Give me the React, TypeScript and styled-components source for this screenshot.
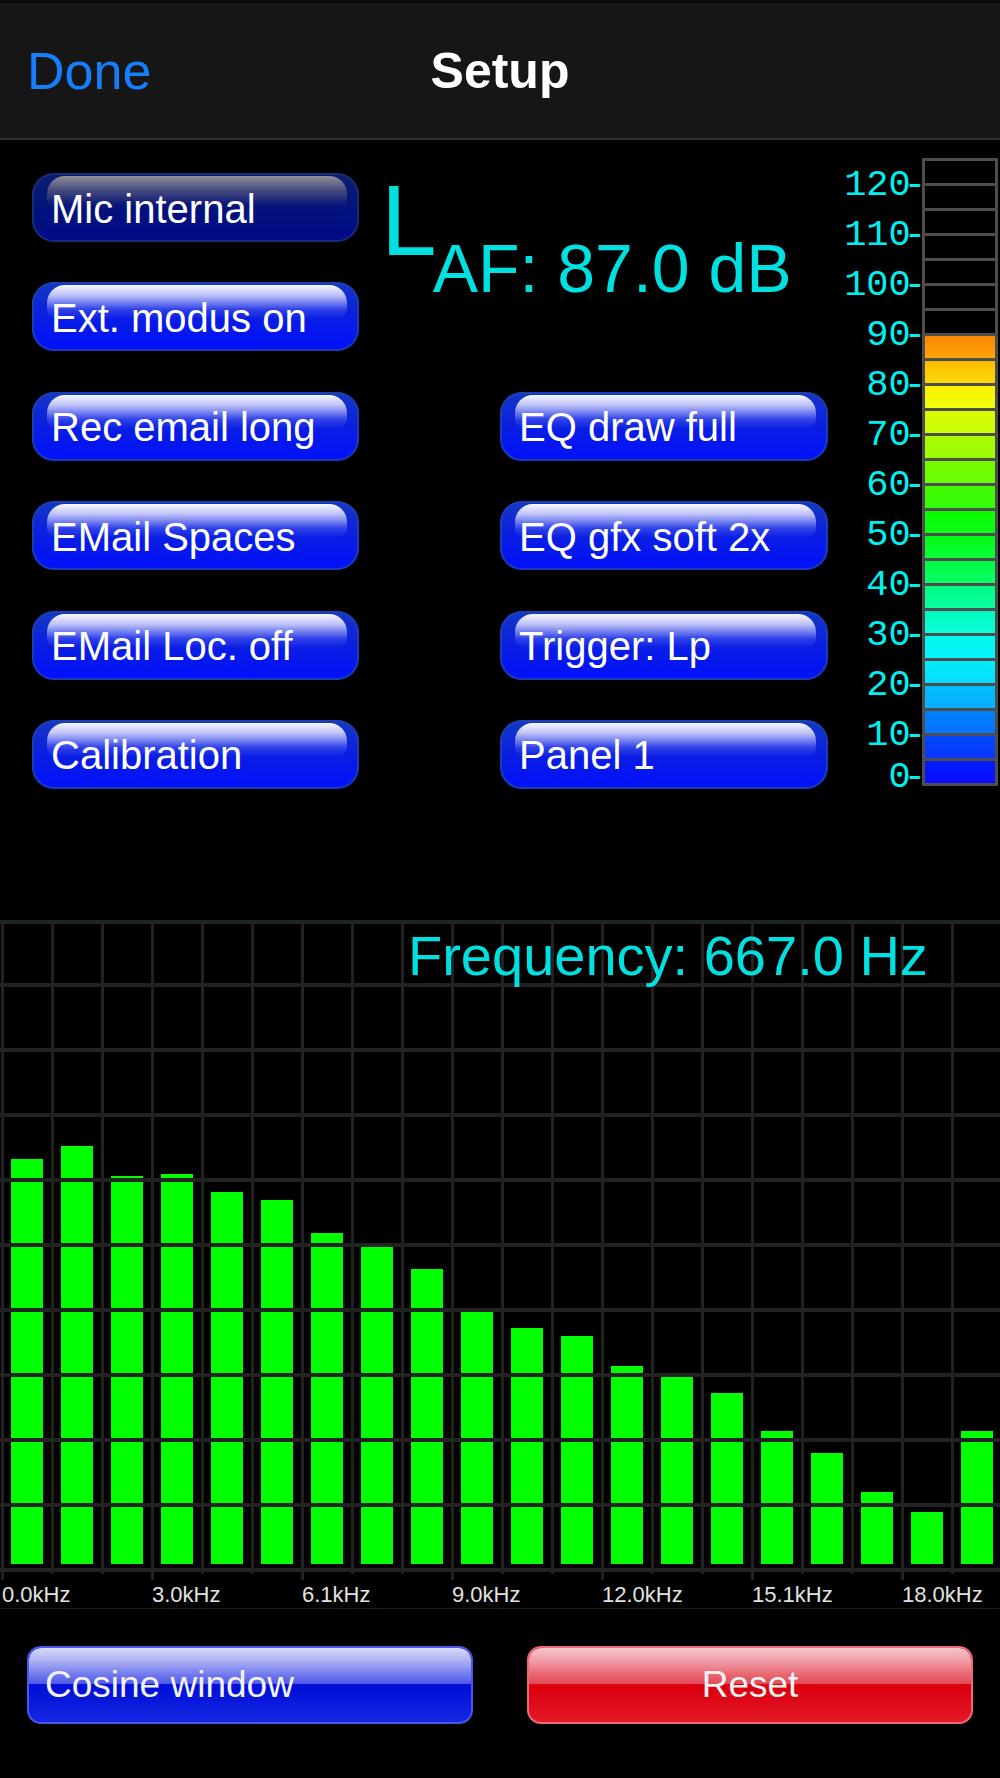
import React from 'react';
import styled, { createGlobalStyle } from 'styled-components';

const GlobalStyle = createGlobalStyle`
  html, body {
    margin: 0;
    padding: 0;
    background: #000;
  }
  body {
    font-family: 'Liberation Sans', Arial, Helvetica, sans-serif;
  }
  *, *::before, *::after {
    box-sizing: border-box;
  }
`;

const Screen = styled.div`
  width: 1000px;
  height: 1778px;
  background: #000;
  overflow: hidden;
  display: flex;
  flex-direction: column;
`;

/* ---------- nav bar ---------- */

const NavBar = styled.header`
  height: 140px;
  flex-shrink: 0;
  border-top: 3px solid #0a0a0a;
  border-bottom: 2px solid #2b2b2b;
  background: #161616;
  display: grid;
  grid-template-columns: 1fr auto 1fr;
  align-items: center;
  padding: 0 23px;
`;

const NavButton = styled.span`
  justify-self: start;
  padding-left: 4px;
  font-size: 52px;
  color: #167efa;
`;

const NavTitle = styled.h1`
  margin: 0;
  font-size: 50px;
  font-weight: bold;
  color: #fff;
`;

/* ---------- top panel ---------- */

const TopPanel = styled.section`
  height: 776px;
  flex-shrink: 0;
  display: flex;
`;

const Controls = styled.div`
  flex: 1;
  display: grid;
  grid-template-columns: 327px 328px;
  grid-auto-rows: 69px;
  column-gap: 141px;
  row-gap: 40.4px;
  padding: 33px 0 0 32px;
  align-content: start;
`;

const GlossButton = styled.button<{ $dim?: boolean }>`
  position: relative;
  height: 69px;
  padding: 3px 0 0 19px;
  border: none;
  border-radius: 22px;
  text-align: left;
  font-family: inherit;
  font-size: 40px;
  color: #fff;
  white-space: nowrap;
  background: ${(p) =>
    p.$dim
      ? 'linear-gradient(#0d1f72, #04127a 50%, #000a88)'
      : 'linear-gradient(#1638c2, #0a1ee2 50%, #0010fc)'};
  box-shadow: inset 0 0 0 2px
    ${(p) => (p.$dim ? 'rgba(22, 46, 118, 0.95)' : 'rgba(26, 64, 176, 0.95)')};

  &::before {
    content: '';
    position: absolute;
    left: 15px;
    right: 12px;
    top: 3px;
    height: 34px;
    border-radius: 18px 18px 10px 10px;
    background: ${(p) =>
      p.$dim
        ? 'linear-gradient(rgba(150, 150, 155, 0.95), rgba(100, 100, 130, 0.7) 40%, rgba(30, 40, 120, 0.15) 85%, rgba(10, 20, 120, 0))'
        : 'linear-gradient(rgba(255, 255, 255, 0.97), rgba(214, 214, 255, 0.88) 30%, rgba(100, 110, 255, 0.4) 72%, rgba(40, 60, 255, 0))'};
  }
`;

const ButtonLabel = styled.span`
  position: relative;
`;

const Readout = styled.div`
  grid-column: 2;
  grid-row: span 2;
  align-self: start;
  display: flex;
  align-items: flex-start;
  margin: -3px 0 0 -119px;
  color: #00e0e0;
  white-space: nowrap;
`;

const ReadoutLetter = styled.span`
  font-size: 100px;
  line-height: 1;
`;

const ReadoutValue = styled.span`
  font-size: 68px;
  line-height: 1;
  margin: 64px 0 0 -4px;
`;

/* ---------- level meter ---------- */

const Meter = styled.div`
  display: flex;
  align-items: flex-start;
  padding-top: 18px;
  margin-right: 2px;
`;

const MeterScale = styled.div`
  display: flex;
  flex-direction: column;
  padding-top: 2px;
  margin-right: -4px;
  font-family: 'Liberation Mono', 'Courier New', monospace;
  font-size: 37px;
  color: #00f0f0;
`;

const ScaleMark = styled.div<{ $last?: boolean }>`
  height: ${(p) => (p.$last ? '26px' : '50px')};
  display: flex;
  align-items: ${(p) => (p.$last ? 'flex-end' : 'center')};
  justify-content: flex-end;
  line-height: ${(p) => (p.$last ? '18px' : '1')};
  white-space: pre;
`;

/* the last digit sits close to the tick */
const TightDigit = styled.span`
  letter-spacing: -7px;
`;

const LowTick = styled.span`
  vertical-align: -9px;
`;

const MeterFrame = styled.div`
  width: 76px;
  border: 3px solid #4d4d4d;
  background: #4d4d4d;
  display: flex;
  flex-direction: column;
  gap: 3px;
`;

const Segment = styled.div<{ $hue: number | null }>`
  height: 22px;
  background: ${(p) =>
    p.$hue === null
      ? '#000'
      : `linear-gradient(hsl(${p.$hue - 3} 100% 49%), hsl(${p.$hue + 3} 100% 52%))`};
`;

/* ---------- spectrum ---------- */

const ChartWrap = styled.div`
  position: relative;
  flex-shrink: 0;
`;

const ChartSvg = styled.svg`
  display: block;
`;

const FreqLabel = styled.div`
  position: absolute;
  top: 12px;
  left: 408px;
  font-size: 56px;
  line-height: 1;
  color: #00e0e0;
  white-space: nowrap;
`;

const AxisRow = styled.div`
  display: grid;
  grid-template-columns: repeat(6, 150px) auto;
  height: 25px;
  margin-top: 2px;
  padding-left: 2px;
  border-bottom: 1px solid #152615;
  font-size: 22px;
  line-height: 22px;
  color: #e2e2e2;
`;

/* ---------- bottom buttons ---------- */

const BottomRow = styled.div`
  display: flex;
  gap: 54px;
  padding: 0 27px;
  margin-top: 37px;
`;

const tones = {
  blue: {
    edge: '#4a58ea',
    body: 'linear-gradient(#0a16d8, #0010d8 55%, #1628e2)',
    gloss: 'linear-gradient(#d8daf9, #aeb2f4 35%, #7078ee 75%, #5058ea)',
  },
  red: {
    edge: '#ea6a78',
    body: 'linear-gradient(#d8000e, #dc0010 55%, #e21a28)',
    gloss: 'linear-gradient(#f6c6cc, #f09ea8 35%, #e8646f 75%, #e24a58)',
  },
};

const WideButton = styled.button<{ $tone: 'blue' | 'red' }>`
  position: relative;
  width: 446px;
  height: 78px;
  border-radius: 14px;
  border: 2px solid ${(p) => tones[p.$tone].edge};
  background: ${(p) => tones[p.$tone].body};
  padding: ${(p) => (p.$tone === 'blue' ? '0 0 0 16px' : '0')};
  text-align: ${(p) => (p.$tone === 'blue' ? 'left' : 'center')};
  font-family: inherit;
  font-size: 37px;
  color: #f2f2f2;
  overflow: hidden;

  &::before {
    content: '';
    position: absolute;
    left: 0;
    right: 0;
    top: 0;
    height: 48%;
    border-radius: 12px 12px 0 0;
    background: ${(p) => tones[p.$tone].gloss};
  }
`;

/* ---------- data ---------- */

const leftButtons = [
  'Rec email long',
  'EMail Spaces',
  'EMail Loc. off',
  'Calibration',
];
const rightButtons = ['EQ draw full', 'EQ gfx soft 2x', 'Trigger: Lp', 'Panel 1'];

// hues of the lit segments, 85-90 dB down to 0-5 dB
const litHues = [35, 48, 60, 70, 82, 94, 107, 120, 128, 139, 154, 168, 180, 186, 197, 212, 226, 236];
const segments: (number | null)[] = [...Array(7).fill(null), ...litHues];
const scaleMarks = ['120', '110', '100', '90', '80', '70', '60', '50', '40', '30', '20', '10'];

const ORIGIN = 916;
const BAR_BASE = 1564;
const barTops = [
  1159, 1146, 1176, 1174, 1192, 1200, 1233, 1247, 1269, 1311,
  1328, 1336, 1366, 1376, 1393, 1431, 1453, 1492, 1512, 1431,
];
const axisLabels = ['0.0kHz', '3.0kHz', '6.1kHz', '9.0kHz', '12.0kHz', '15.1kHz', '18.0kHz'];

function Spectrum() {
  return (
    <ChartWrap>
      <ChartSvg width={1000} height={666} viewBox="0 0 1000 666">
        {barTops.map((top, i) => (
          <rect key={i} x={50 * i + 11} y={top - ORIGIN} width={32} height={BAR_BASE - top} fill="#00ff00" />
        ))}
        {Array.from({ length: 11 }, (_, j) => (
          <rect
            key={`h${j}`}
            x={0}
            y={j === 0 ? 4 : 2 + 65 * j}
            width={1000}
            height={4}
            fill={j === 0 ? '#1c281d' : '#222'}
          />
        ))}
        {Array.from({ length: 20 }, (_, i) => (
          <rect
            key={`v${i}`}
            x={50 * i + 1}
            y={4}
            width={3}
            height={(i % 3 === 0 ? 1580 : 1574) - 920}
            fill="#222"
          />
        ))}
      </ChartSvg>
      <FreqLabel>Frequency: 667.0 Hz</FreqLabel>
    </ChartWrap>
  );
}

export default function App() {
  return (
    <Screen>
      <GlobalStyle />
      <NavBar>
        <NavButton>Done</NavButton>
        <NavTitle>Setup</NavTitle>
      </NavBar>

      <TopPanel>
        <Controls>
          <GlossButton $dim>
            <ButtonLabel>Mic internal</ButtonLabel>
          </GlossButton>
          <Readout>
            <ReadoutLetter>L</ReadoutLetter>
            <ReadoutValue>AF: 87.0 dB</ReadoutValue>
          </Readout>
          <GlossButton>
            <ButtonLabel>Ext. modus on</ButtonLabel>
          </GlossButton>
          {leftButtons.map((label, i) => (
            <React.Fragment key={label}>
              <GlossButton>
                <ButtonLabel>{label}</ButtonLabel>
              </GlossButton>
              <GlossButton>
                <ButtonLabel>{rightButtons[i]}</ButtonLabel>
              </GlossButton>
            </React.Fragment>
          ))}
        </Controls>

        <Meter>
          <MeterScale>
            {scaleMarks.map((v) => (
              <ScaleMark key={v}>
                {v.slice(0, -1)}
                <TightDigit>{v.slice(-1)}</TightDigit>-
              </ScaleMark>
            ))}
            <ScaleMark $last>
              <TightDigit>0</TightDigit>
              <LowTick>-</LowTick>
            </ScaleMark>
          </MeterScale>
          <MeterFrame>
            {segments.map((hue, i) => (
              <Segment key={i} $hue={hue} />
            ))}
          </MeterFrame>
        </Meter>
      </TopPanel>

      <Spectrum />
      <AxisRow>
        {axisLabels.map((l) => (
          <span key={l}>{l}</span>
        ))}
      </AxisRow>

      <BottomRow>
        <WideButton $tone="blue">
          <ButtonLabel>Cosine window</ButtonLabel>
        </WideButton>
        <WideButton $tone="red">
          <ButtonLabel>Reset</ButtonLabel>
        </WideButton>
      </BottomRow>
    </Screen>
  );
}
